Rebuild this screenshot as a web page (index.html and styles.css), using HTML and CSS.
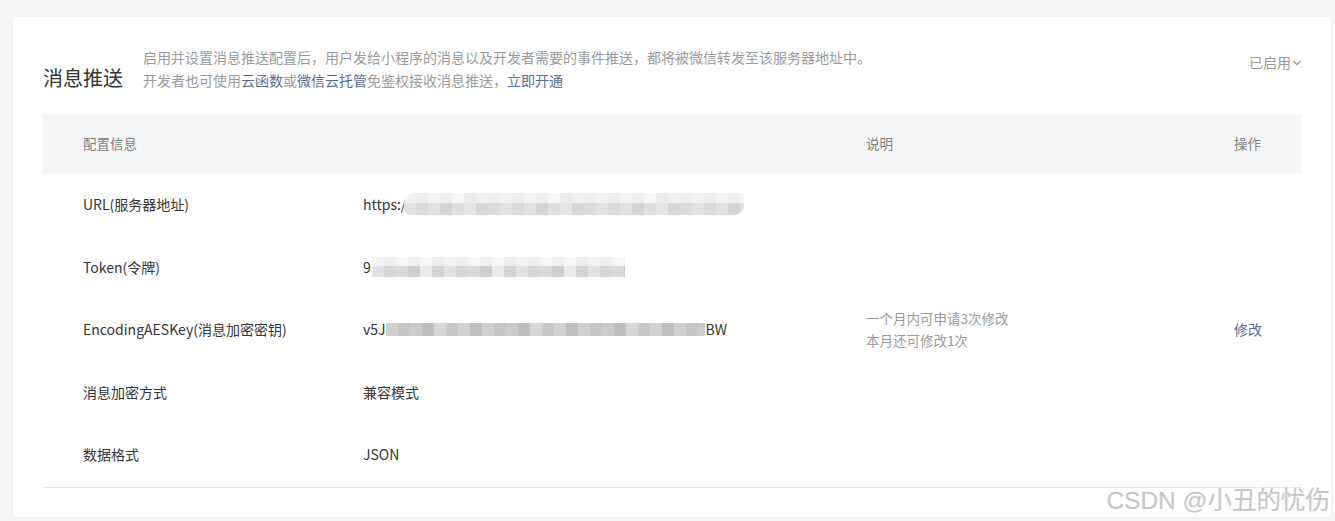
FILE: index.html
```html
<!DOCTYPE html>
<html lang="zh-CN">
<head>
<meta charset="utf-8">
<title>消息推送</title>
<link rel="stylesheet" href="styles.css">
</head>
<body>
<div class="page">
  <section class="card">
    <header class="head">
      <h2 class="title">消息推送</h2>
      <div class="desc">
        <p>启用并设置消息推送配置后，用户发给小程序的消息以及开发者需要的事件推送，都将被微信转发至该服务器地址中。</p>
        <p>开发者也可使用<a class="link" href="#">云函数</a>或<a class="link" href="#">微信云托管</a>免鉴权接收消息推送，<a class="link" href="#">立即开通</a></p>
      </div>
      <div class="status">已启用<svg class="chev" width="10" height="10" viewBox="0 0 10 10"><polyline points="1.5,3 5,6.5 8.5,3" fill="none" stroke="#9a9a9a" stroke-width="1.3"/></svg></div>
    </header>

    <div class="table">
      <div class="row thead">
        <div>配置信息</div>
        <div></div>
        <div>说明</div>
        <div>操作</div>
      </div>
      <div class="row">
        <div>URL(服务器地址)</div>
        <div class="val">https:/<span class="mosaic m-url"></span></div>
        <div></div>
        <div></div>
      </div>
      <div class="row">
        <div>Token(令牌)</div>
        <div class="val">9<span class="mosaic m-token"></span></div>
        <div></div>
        <div></div>
      </div>
      <div class="row">
        <div>EncodingAESKey(消息加密密钥)</div>
        <div class="val">v5J<span class="mosaic m-key"></span>BW</div>
        <div class="note"><p>一个月内可申请3次修改</p><p>本月还可修改1次</p></div>
        <div><a class="link" href="#">修改</a></div>
      </div>
      <div class="row">
        <div>消息加密方式</div>
        <div class="val">兼容模式</div>
        <div></div>
        <div></div>
      </div>
      <div class="row last">
        <div>数据格式</div>
        <div class="val">JSON</div>
        <div></div>
        <div></div>
      </div>
    </div>
  </section>
  <div class="watermark">CSDN @小丑的忧伤</div>
</div>
</body>
</html>
```

FILE: styles.css
```css
* { box-sizing: border-box; }
html, body { margin: 0; padding: 0; }
body {
  background: #f6f7f9;
  font-family: "Noto Sans CJK SC", "Noto Sans", "Liberation Sans", sans-serif;
  color: #353535;
  font-size: 14px;
}
p { margin: 0; }
.page {
  position: relative;
  width: 1335px;
  height: 521px;
  padding: 17px 4px 0 13px;
}
.card {
  background: #fff;
  height: 500px;
  border-radius: 4px;
  box-shadow: 0 1px 3px rgba(0,0,0,0.06);
  padding: 28px 29px 0 30px;
}
.head {
  display: flex;
  align-items: flex-end;
  height: 47px;
  margin-bottom: 22px;
}
.title {
  margin: 0;
  font-size: 20px;
  font-weight: normal;
  line-height: 28px;
  color: #353535;
  width: 100px;
  flex: none;
}
.desc {
  flex: 1;
  color: #9a9a9a;
  font-size: 14px;
  line-height: 23px;
}
.link { color: #576b95; text-decoration: none; }
.status {
  align-self: flex-start;
  margin-top: 6px;
  color: #9a9a9a;
  line-height: 23px;
  display: flex;
  align-items: center;
}
.chev { margin-left: 1px; margin-top: 1px; }

.table { border-bottom: 1px solid #e7e7e7; }
.row {
  display: grid;
  grid-template-columns: 280px 503px 368px 1fr;
  padding-left: 40px;
  padding-bottom: 2px;
  align-items: center;
  height: 62.5px;
}
.thead {
  height: 60px;
  padding-bottom: 3px;
  background: #f6f7f9;
  color: #7e7e7e;
  font-size: 13.5px;
}
.val { display: flex; align-items: center; white-space: nowrap; }
.note { color: #9a9a9a; line-height: 22px; font-size: 13.5px; }

.mosaic { display: inline-block; flex: none; }
.m-url {
  width: 340px;
  height: 22px;
  margin-left: -2px;
  border-radius: 10px 4px 10px 6px;
  background:
    linear-gradient(90deg, #f3f3f3 0 12px, #eeeeee 12px 24px, #f5f5f5 24px 36px, #efefef 36px 48px, #f6f6f6 48px 60px, #ececec 60px 72px, #f2f2f2 72px 84px, #efefef 84px 96px) 0 0 / 96px 10px repeat-x,
    linear-gradient(90deg, #e3e3e3 0 12px, #d9d9d9 12px 24px, #e0e0e0 24px 36px, #d4d4d4 36px 48px, #dedede 48px 60px, #e6e6e6 60px 72px, #d7d7d7 72px 84px, #dcdcdc 84px 96px) 0 10px / 96px 12px repeat-x;
}
.m-token {
  width: 253px;
  height: 20px;
  margin-left: 1px;
  background:
    linear-gradient(90deg, #f4f4f4 0 12px, #efefef 12px 24px, #f6f6f6 24px 36px, #f1f1f1 36px 48px, #f7f7f7 48px 60px, #eeeeee 60px 72px) 0 0 / 72px 9px repeat-x,
    linear-gradient(90deg, #e2e2e2 0 12px, #d6d6d6 12px 24px, #dadada 24px 36px, #cfcfcf 36px 48px, #eaeaea 48px 60px, #d3d3d3 60px 72px) 0 9px / 72px 11px repeat-x;
}
.m-key {
  width: 319px;
  height: 13px;
  margin-right: 1px;
  background: linear-gradient(90deg, #d0d0d0 0 12px, #c6c6c6 12px 24px, #cbcbcb 24px 36px, #bdbdbd 36px 48px, #d6d6d6 48px 60px, #c8c8c8 60px 72px, #d2d2d2 72px 84px, #bfbfbf 84px 96px) 0 0 / 96px 13px repeat-x;
}

.watermark {
  position: absolute;
  right: 5px;
  bottom: 6px;
  font-family: "Liberation Sans", "Noto Sans CJK SC", sans-serif;
  font-size: 24.5px;
  color: rgba(190,190,190,0.85);
  text-shadow: 0 1px 1px rgba(255,255,255,0.9), 0 0 1px rgba(120,120,120,0.3);
  line-height: 28px;
}
```
